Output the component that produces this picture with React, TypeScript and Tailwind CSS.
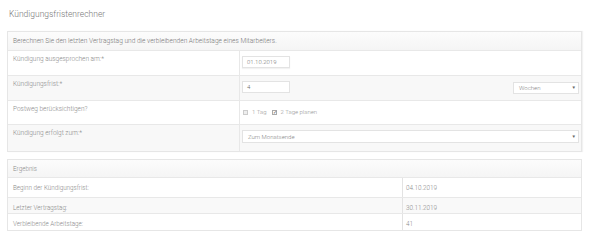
import React from "react";

const font = { fontFamily: "Roboto, 'Open Sans', sans-serif" };

function Row({ label, children, gray, h }: { label: string; children?: React.ReactNode; gray?: boolean; h: string }) {
  return (
    <div className={`flex border-t border-[#e8e8e8] ${gray ? "bg-[#f8f8f8]" : "bg-white"} ${h}`}>
      <div className="w-[231px] shrink-0 pl-[5px] pt-[4px] text-[6.5px] leading-[8px] text-[#8a8a8a] font-light">{label}</div>
      <div className="flex-1 border-l border-[#e8e8e8] pl-[2px] pr-[2px]">{children}</div>
    </div>
  );
}

export default function App() {
  return (
    <div className="w-[600px] h-[250px] bg-white overflow-hidden" style={font}>
      <div className="pl-[9px] pt-[9px] h-[31px] text-[8.5px] leading-[10px] text-[#777] font-light">Kündigungsfristenrechner</div>
      <div className="ml-[7px] w-[575px] border border-[#e6e6e6] shadow-[1px_0_1px_rgba(0,0,0,0.05)]">
        <div className="h-[18px] bg-gradient-to-b from-[#fcfcfc] to-[#f5f5f5] pl-[5px] pt-[5px] text-[6.6px] leading-[8px] text-[#777] font-light">
          Berechnen Sie den letzten Vertragstag und die verbleibenden Arbeitstage eines Mitarbeiters.
        </div>
        <Row label="Kündigung ausgesprochen am:*" h="h-[25px]">
          <div className="mt-[5px] w-[48px] h-[12px] border border-[#e3e3e3] shadow-[0_1px_1px_rgba(0,0,0,0.05)] bg-white pl-[4px] text-[6px] leading-[10px] text-[#777] font-light">01.10.2019</div>
        </Row>
        <Row label="Kündigungsfrist:*" gray h="h-[25px]">
          <div className="flex items-start justify-between">
            <div className="mt-[5px] w-[48px] h-[12px] border border-[#e3e3e3] bg-white pl-[4px] text-[6px] leading-[10px] text-[#666] font-light">4</div>
            <div className="mt-[6px] w-[66px] h-[12px] border border-[#e3e3e3] bg-white pl-[5px] pr-[2px] flex justify-between text-[6px] leading-[10px] text-[#888] font-light">
              <span>Wochen</span><span className="text-[4.5px] text-[#666]">▼</span>
            </div>
          </div>
        </Row>
        <Row label="Postweg berücksichtigen?" h="h-[24px]">
          <div className="flex items-center pt-[7px] text-[6px] leading-[8px] text-[#999] font-light">
            <span className="w-[5px] h-[5px] border border-[#ccc] bg-[#eee] ml-[1px]" />
            <span className="ml-[4px]">1 Tag</span>
            <span className="ml-[6px] w-[5px] h-[5px] border border-[#aaa] bg-white text-[5px] leading-[4px] text-[#555] flex items-center justify-center">✓</span>
            <span className="ml-[3px]">2 Tage planen</span>
          </div>
        </Row>
        <Row label="Kündigung erfolgt zum:*" gray h="h-[27px]">
          <div className="mt-[5px] h-[13px] border border-[#e3e3e3] bg-white pl-[5px] pr-[2px] flex justify-between text-[6px] leading-[11px] text-[#888] font-light">
            <span>Zum Monatsende</span><span className="text-[4.5px] text-[#666]">▼</span>
          </div>
        </Row>
      </div>
      <div className="ml-[7px] mt-[7px] w-[575px] border border-[#e6e6e6] text-[6.3px] leading-[8px] text-[#8a8a8a] font-light">
        <div className="h-[17px] bg-gradient-to-b from-[#fcfcfc] to-[#f5f5f5] pl-[5px] pt-[5px]">Ergebnis</div>
        {[
          ["Beginn der Kündigungsfrist:", "04.10.2019", "h-[20px]"],
          ["Letzter Vertragstag:", "30.11.2019", "h-[16px]"],
          ["Verbleibende Arbeitstage:", "41", "h-[17px]"],
        ].map(([a, b, h], i) => (
          <div key={a} className={`flex border-t border-[#e8e8e8] ${i % 2 === 1 ? "bg-[#f9f9f9]" : "bg-white"} ${h}`}>
            <div className="w-[394px] pl-[5px] pt-[6px]">{a}</div>
            <div className="flex-1 border-l border-[#e3e3e3] pl-[3px] pt-[6px]">{b}</div>
          </div>
        ))}
      </div>
    </div>
  );
}
